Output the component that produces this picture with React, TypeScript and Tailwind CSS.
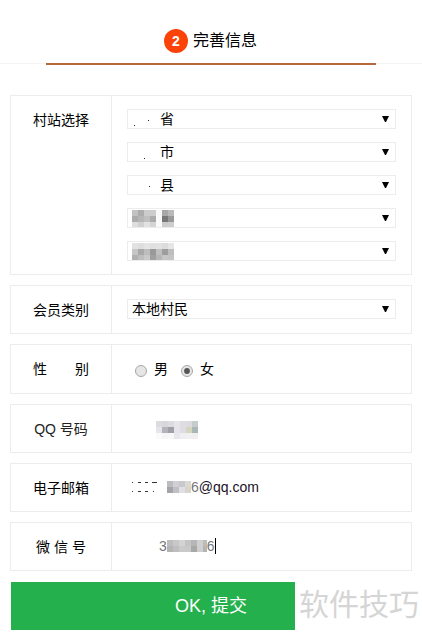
import React from 'react'
import clsx from 'clsx'

type MosaicProps = {
  rows: string[][]
  width: number
  height: number
  size?: number
  className?: string
}

// Pixelated block that hides private values
const Mosaic: React.FC<MosaicProps> = ({ rows, width, height, size = 6, className }) => (
  <svg width={width} height={height} shapeRendering="crispEdges" className={clsx('block shrink-0', className)}>
    {rows.map((row, y) =>
      row.map((fill, x) => (
        <rect key={`${x}-${y}`} x={x * size} y={y * size} width={size} height={size} fill={fill} />
      ))
    )}
  </svg>
)

const townCells = [
  ['#c2c2c2', '#adadad', '#cccccc', '#cccccc', '#f8f8f8', '#a8a8a8', '#bababa'],
  ['#acacac', '#b6b6b6', '#c0c0c0', '#ababab', '#fafafa', '#787878', '#999999'],
  ['#dedede', '#d0d0d0', '#e2e2e2', '#d4d4d4', '#fafafa', '#cccccc', '#cecece'],
]

const villageCells = [
  ['#e2e2e2', '#dedede', '#e4e4e4', '#e0e0e0', '#e2e2e2', '#dcdcdc', '#e6e6e6'],
  ['#c6c6c6', '#a9a9a9', '#bdbdbd', '#999999', '#c0c0c0', '#9e9e9e', '#bebebe'],
  ['#b0b0b0', '#bdbdbd', '#c9c9c9', '#a0a0a0', '#b6b6b6', '#c6c6c6', '#c4c4c4'],
]

const qqCells = [
  ['#dcdce0', '#d8d8dc', '#dcdce0', '#e6e6e8', '#dedee2', '#dcdcdc', '#c6ccce'],
  ['#e6e6ea', '#b5b3ba', '#a19ea8', '#e6e4ea', '#dddde3', '#d5d6bf', '#a9b8b6'],
  ['#fafafa', '#f5f5f5', '#f7f7f7', '#e8e8ec', '#efeff1', '#f0f0f0', '#efefef'],
]

const mailCells = [
  ['#bcbcc0', '#d0d0d3', '#c9c9cd', '#dadad4'],
  ['#a5a3aa', '#c0bfc5', '#e1dfe5', '#d5d5cc'],
]

const wechatCells = [
  ['#bdbdbd', '#c8c8c8', '#d3d3d3', '#c4c4c4', '#b6b6b6', '#d0d0d0', '#bcbcbc'],
  ['#b4b4b4', '#bebebe', '#cacaca', '#c9c9c9', '#a8a8a8', '#cfcfcf', '#b4b4b4'],
]

type RowProps = {
  label: string
  className: string
  labelClassName?: string
  children: React.ReactNode
}

const Row: React.FC<RowProps> = ({ label, className, labelClassName, children }) => (
  <div className={clsx('flex border border-[#ececec]', className)}>
    <div
      className={clsx(
        'w-[101px] shrink-0 border-r border-[#ececec] pt-[13px] text-center leading-[22px] whitespace-pre',
        labelClassName
      )}
    >
      {label}
    </div>
    <div className="min-w-0 flex-1 px-[15px]">{children}</div>
  </div>
)

const Select: React.FC<{ children: React.ReactNode }> = ({ children }) => (
  <div className="flex h-5 items-center justify-between border border-[#ececec] pr-[6px] pl-1">
    <div className="flex h-full items-center leading-[18px]">{children}</div>
    <svg width="7" height="6" className="block">
      <path d="M0 0H7L4 6H3Z" fill="#000" />
    </svg>
  </div>
)

// Leftover specks of an erased name
const Specks: React.FC<{ points: number[][] }> = ({ points }) => (
  <svg width="28" height="18" className="block" shapeRendering="crispEdges">
    {points.map(([x, y]) => (
      <rect key={x} x={x} y={y} width="1" height="1" fill="#222" />
    ))}
  </svg>
)

const Radio: React.FC<{ checked?: boolean }> = ({ checked }) => (
  <svg width="12" height="12" viewBox="0 0 12 12" className="mt-[3px] block">
    <circle cx="6" cy="6" r="5.5" fill="#e6e6e6" stroke="#a6a6a6" />
    {checked && <circle cx="6" cy="6" r="2.9" fill="#555" />}
  </svg>
)

export default function App() {
  return (
    <div className="h-[636px] w-[422px] overflow-hidden bg-white font-['Liberation_Sans','Noto_Sans_CJK_SC',sans-serif] text-sm text-black">
      {/* Step header */}
      <header className="relative h-16 border-b border-[#f3f3f3]">
        <div className="flex h-16 items-center pt-[18px] pl-[164px]">
          <span className="flex size-6 items-center justify-center rounded-full bg-[#fb4209] text-sm font-bold text-white">
            2
          </span>
          <span className="ml-[5px] text-base leading-6">完善信息</span>
        </div>
        <div className="absolute top-[63px] left-[46px] h-0.5 w-[330px] bg-[#b56838]" />
      </header>

      <main className="ml-[10px] flex w-[402px] flex-col pt-[31px]">
        <Row label="村站选择" className="h-[180px]">
          <div className="flex flex-col gap-[13px] pt-[13px]">
            <Select>
              <Specks points={[[2, 15], [16, 10]]} />
              省
            </Select>
            <Select>
              <Specks points={[[12, 15]]} />
              市
            </Select>
            <Select>
              <Specks points={[[17, 10]]} />
              县
            </Select>
            <Select>
              <Mosaic rows={townCells} width={42} height={17} />
            </Select>
            <Select>
              <Mosaic rows={villageCells} width={42} height={17} />
            </Select>
          </div>
        </Row>

        <Row label="会员类别" className="mt-[10px] h-[49px]">
          <div className="pt-[13px]">
            <Select>本地村民</Select>
          </div>
        </Row>

        <Row label="性　　别" className="mt-[10px] h-[50px]">
          <div className="flex h-full items-center pl-2">
            <Radio />
            <span className="ml-[7px]">男</span>
            <span className="ml-[13px]">
              <Radio checked />
            </span>
            <span className="ml-[7px]">女</span>
          </div>
        </Row>

        <Row label="QQ 号码" labelClassName="text-[#222]" className="mt-[10px] h-[49px]">
          <Mosaic rows={qqCells} width={42} height={18} className="mt-4 ml-[29px]" />
        </Row>

        <Row label="电子邮箱" className="mt-[10px] h-[49px]">
          <div className="flex h-full items-center pb-[2px]">
            <svg width="35" height="12" className="ml-[5px] block" shapeRendering="crispEdges">
              <path
                d="M0 1h1M6 1h3M13 1h3M20 1h5M0 10h1M6 10h3M13 10h3M21 10h1"
                stroke="#333"
                strokeWidth="1"
                transform="translate(0 .5)"
              />
            </svg>
            <Mosaic rows={mailCells} width={24} height={12} />
            <span className="text-[#1c1226]">
              <span className="text-[#777]">6</span>@qq.com
            </span>
          </div>
        </Row>

        <Row label="微 信 号" className="mt-[10px] h-[49px]">
          <div className="flex h-full items-center pb-[2px] pl-8">
            <span className="text-[#777]">3</span>
            <Mosaic rows={wechatCells} width={40} height={12} />
            <span className="text-[#777]">6</span>
            <span className="h-4 w-px bg-black" />
          </div>
        </Row>

        <div className="mt-[11px] ml-px flex">
          <button className="h-12 w-[284px] shrink-0 bg-[#24b14d] pl-[116px] text-lg text-white">OK, 提交</button>
          <span className="ml-1 text-[30px] leading-[46px] whitespace-nowrap text-[#d5d5d5]">软件技巧</span>
        </div>
      </main>
    </div>
  )
}
